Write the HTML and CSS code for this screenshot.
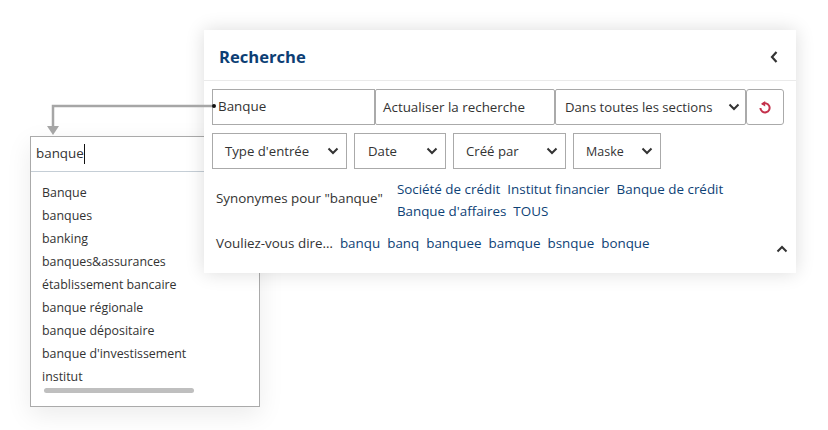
FILE: index.html
```html
<!DOCTYPE html>
<html lang="fr">
<head>
    <meta charset="UTF-8">
    <title>Recherche</title>
    <link rel="stylesheet" href="styles.css">
</head>
<body>
    <div class="stage">
        <!-- suggestions dropdown -->
        <div class="suggest">
            <div class="suggest-input"><span>banque</span><i class="caret"></i></div>
            <ul class="suggest-list">
                <li>Banque</li>
                <li>banques</li>
                <li>banking</li>
                <li>banques&amp;assurances</li>
                <li>établissement bancaire</li>
                <li>banque régionale</li>
                <li>banque dépositaire</li>
                <li>banque d'investissement</li>
                <li>institut</li>
            </ul>
            <div class="scrollbar"></div>
        </div>

        <!-- search panel -->
        <section class="panel">
            <header class="panel-head">
                <h2>Recherche</h2>
                <svg class="icon-back" width="10" height="14" viewBox="0 0 10 14"><path d="M7.5 2 L3 7 L7.5 12" fill="none" stroke="#333" stroke-width="2.2"/></svg>
            </header>
            <div class="panel-body">
                <div class="row-search">
                    <div class="box query">Banque</div>
                    <div class="box update">Actualiser la recherche</div>
                    <div class="box section">
                        <span>Dans toutes les sections</span>
                        <svg class="chev" width="12" height="8" viewBox="0 0 12 8"><path d="M1.5 1.5 L6 6 L10.5 1.5" fill="none" stroke="#333" stroke-width="2"/></svg>
                    </div>
                    <div class="box reset">
                        <svg width="14" height="15" viewBox="0 0 14 15"><path d="M4.2 4.2 A4.6 4.6 0 1 1 2.4 8" fill="none" stroke="#c4314b" stroke-width="2"/><path d="M7.2 1 L7.2 6.6 L3 4 Z" fill="#c4314b"/></svg>
                    </div>
                </div>
                <div class="row-filters">
                    <div class="box filter f-type"><span>Type d'entrée</span><svg class="chev" width="12" height="8" viewBox="0 0 12 8"><path d="M1.5 1.5 L6 6 L10.5 1.5" fill="none" stroke="#333" stroke-width="2"/></svg></div>
                    <div class="box filter f-date"><span>Date</span><svg class="chev" width="12" height="8" viewBox="0 0 12 8"><path d="M1.5 1.5 L6 6 L10.5 1.5" fill="none" stroke="#333" stroke-width="2"/></svg></div>
                    <div class="box filter f-author"><span>Créé par</span><svg class="chev" width="12" height="8" viewBox="0 0 12 8"><path d="M1.5 1.5 L6 6 L10.5 1.5" fill="none" stroke="#333" stroke-width="2"/></svg></div>
                    <div class="box filter f-mask"><span>Maske</span><svg class="chev" width="12" height="8" viewBox="0 0 12 8"><path d="M1.5 1.5 L6 6 L10.5 1.5" fill="none" stroke="#333" stroke-width="2"/></svg></div>
                </div>
                <div class="synonyms">
                    <span class="label">Synonymes pour "banque"</span>
                    <div class="links syn-links">
                        <a>Société de crédit</a>
                        <a>Institut financier</a>
                        <a>Banque de crédit</a>
                        <a>Banque d'affaires</a>
                        <a>TOUS</a>
                    </div>
                </div>
                <div class="didyoumean">
                    <span class="label">Vouliez-vous dire…</span>
                    <div class="links">
                        <a>banqu</a>
                        <a>banq</a>
                        <a>banquee</a>
                        <a>bamque</a>
                        <a>bsnque</a>
                        <a>bonque</a>
                    </div>
                </div>
            </div>
            <svg class="icon-up" width="12" height="8" viewBox="0 0 12 8"><path d="M1.5 6.5 L6 2 L10.5 6.5" fill="none" stroke="#333" stroke-width="2"/></svg>
        </section>

        <!-- connector between the query field and the dropdown -->
        <svg class="connector" width="180" height="32" viewBox="0 0 180 32">
            <path d="M164 1 H3 V22" fill="none" stroke="#a6a6a6" stroke-width="2.5"/>
            <path d="M-3 21 H9 L3 30 Z" fill="#a6a6a6"/>
            <circle cx="164" cy="1" r="2" fill="#111"/>
        </svg>
    </div>
</body>
</html>
```

FILE: styles.css
```css
* {
    box-sizing: border-box;
}

body {
    margin: 0;
    background-color: #fff;
    color: #333;
    font-family: 'Open Sans', sans-serif;
    font-size: 13.4px;
}

.stage {
    position: relative;
    width: 828px;
    height: 430px;
    overflow: hidden;
}

/* dropdown window */
.suggest {
    position: absolute;
    left: 30px;
    top: 136px;
    width: 230px;
    height: 271px;
    border: 1px solid #aaa;
    background-color: #fff;
    box-shadow: 0 8px 24px rgba(0, 0, 0, 0.08);
}

.suggest-input {
    display: flex;
    align-items: center;
    height: 35px;
    padding: 0 0 1px 5px;
    border-bottom: 1px solid #c5ced6;
    font-size: 13.4px;
}

.suggest-input span {
    margin-bottom: 2px;
}

.caret {
    width: 1px;
    height: 20px;
    background-color: #111;
}

.suggest-list {
    list-style: none;
    margin: 0;
    padding: 9px 0 0 11px;
    font-size: 12.4px;
}

.suggest-list li {
    height: 23px;
    line-height: 23px;
}

.scrollbar {
    width: 150px;
    height: 5px;
    margin: 0 0 0 13px;
    border-radius: 3px;
    background-color: #bfbfbf;
}

/* main window */
.panel {
    position: absolute;
    left: 204px;
    top: 30px;
    width: 592px;
    height: 243px;
    background-color: #fff;
    box-shadow: 0 0 18px rgba(0, 0, 0, 0.14);
}

.panel-head {
    display: flex;
    justify-content: space-between;
    align-items: center;
    height: 51px;
    padding: 3px 17px 0 15px;
    border-bottom: 1px solid #eaeaea;
}

.panel-head h2 {
    margin: 0;
    color: #0c3e74;
    font-size: 16.6px;
    font-weight: 700;
}

.panel-body {
    padding: 8px 12px 0 8px;
}

.box {
    display: flex;
    align-items: center;
    height: 36px;
    border: 1px solid #aaa;
    background-color: #fff;
}

.row-search {
    display: flex;
}

.query {
    width: 163px;
    padding: 0 0 2px 5px;
}

.update {
    width: 180px;
    padding-left: 7px;
    border-radius: 2px;
}

.section {
    justify-content: space-between;
    width: 191px;
    padding: 0 5px 0 9px;
    border-radius: 2px;
    font-size: 13.15px;
}

.reset {
    justify-content: center;
    width: 38px;
    border-radius: 3px;
}

.row-filters {
    display: flex;
    gap: 7px;
    margin-top: 8px;
}

.filter {
    justify-content: space-between;
    padding: 0 7px 0 12px;
    font-size: 13.2px;
}

.f-type {
    width: 135px;
}

.f-date {
    width: 92px;
    padding-left: 13px;
}

.f-author {
    width: 113px;
}

.f-mask {
    width: 88px;
    font-size: 12.5px;
}

.label {
    flex: none;
}

.links {
    display: flex;
    flex-wrap: wrap;
    gap: 0 7px;
    color: #0e4276;
}

.synonyms {
    display: flex;
    align-items: flex-start;
    margin-top: 9px;
    padding-left: 4px;
}

.synonyms .label {
    margin-top: 9px;
    line-height: 22px;
}

.syn-links {
    width: 350px;
    margin-left: 14px;
    line-height: 22px;
}

.didyoumean {
    display: flex;
    align-items: center;
    gap: 7px;
    margin-top: 10px;
    padding-left: 4px;
    line-height: 22px;
}

.icon-up {
    position: absolute;
    right: 8px;
    bottom: 20px;
}

.connector {
    position: absolute;
    left: 50px;
    top: 105px;
    overflow: visible;
}
```
